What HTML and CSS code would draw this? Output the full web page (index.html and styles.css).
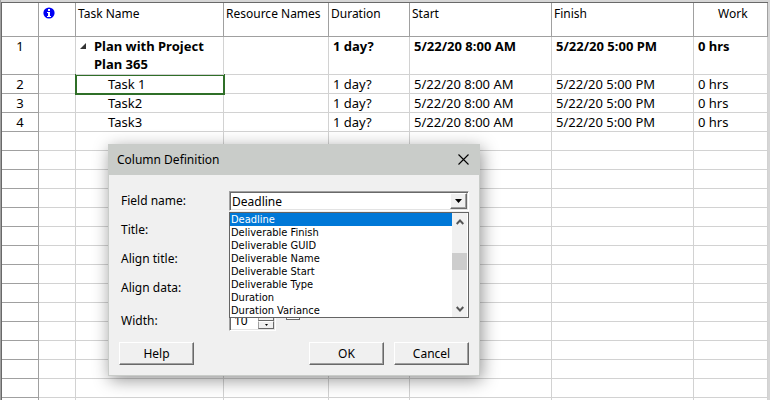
FILE: index.html
```
<!DOCTYPE html>
<html lang="en">
<head>
<meta charset="utf-8">
<title>Plan with Project Plan 365</title>
<link rel="stylesheet" href="styles.css">
</head>
<body>
<main class="sheet">
  <table class="grid">
    <colgroup>
      <col class="c-id"><col class="c-info"><col class="c-name"><col class="c-res"><col class="c-dur"><col class="c-date"><col class="c-date"><col class="c-work">
    </colgroup>
    <thead>
      <tr>
        <th></th>
        <th class="info"><svg width="12" height="12" viewBox="0 0 12 12" role="img" aria-label="Indicators"><circle cx="6" cy="6" r="5.6" fill="#0000f5"/><path d="M5 2h2v2H5zM4 5h3v4h1v1H4V9h1V6H4z" fill="#fff"/></svg></th>
        <th>Task Name</th><th>Resource Names</th><th>Duration</th><th>Start</th><th>Finish</th><th class="work">Work</th>
      </tr>
    </thead>
    <tbody id="rows">
      <tr class="summary"><td class="id">1</td><td></td><td class="name"><svg class="twisty" width="6" height="6" viewBox="0 0 6 6"><path d="M6 0v6H0z" fill="#333"/></svg>Plan with Project Plan 365</td><td></td><td>1 day?</td><td>5/22/20 8:00 AM</td><td>5/22/20 5:00 PM</td><td>0 hrs</td></tr>
      <tr><td class="id">2</td><td></td><td class="task selected">Task 1</td><td></td><td>1 day?</td><td>5/22/20 8:00 AM</td><td>5/22/20 5:00 PM</td><td>0 hrs</td></tr>
      <tr><td class="id">3</td><td></td><td class="task">Task2</td><td></td><td>1 day?</td><td>5/22/20 8:00 AM</td><td>5/22/20 5:00 PM</td><td>0 hrs</td></tr>
      <tr><td class="id">4</td><td></td><td class="task">Task3</td><td></td><td>1 day?</td><td>5/22/20 8:00 AM</td><td>5/22/20 5:00 PM</td><td>0 hrs</td></tr>
    </tbody>
  </table>
</main>

<section class="dialog" role="dialog" aria-labelledby="dlg-title">
  <header class="titlebar">
    <h1 id="dlg-title">Column Definition</h1>
    <button class="close" type="button" aria-label="Close"><svg width="11" height="11" viewBox="0 0 11 11"><path d="M.5.5l10 10M10.5.5l-10 10" stroke="#000" stroke-width="1.1" fill="none"/></svg></button>
  </header>
  <form class="body">
    <div class="row">
      <label for="field">Field name:</label>
      <div class="control">
        <div class="combo">
          <select id="field"><option>Deadline</option></select>
          <span class="arrow"><svg width="7" height="4" viewBox="0 0 7 4"><path d="M0 0h7L3.5 4z"/></svg></span>
        </div>
        <div class="dropdown">
          <ul role="listbox" aria-label="Field name">
            <li role="option" aria-selected="true">Deadline</li>
            <li role="option">Deliverable Finish</li>
            <li role="option">Deliverable GUID</li>
            <li role="option">Deliverable Name</li>
            <li role="option">Deliverable Start</li>
            <li role="option">Deliverable Type</li>
            <li role="option">Duration</li>
            <li role="option">Duration Variance</li>
          </ul>
          <div class="scrollbar">
            <svg width="8" height="6" viewBox="0 0 8 6"><path d="M.7 5L4 1.5 7.3 5" fill="none" stroke="#555" stroke-width="1.9"/></svg>
            <span class="thumb"></span>
            <svg width="8" height="6" viewBox="0 0 8 6"><path d="M.7 1L4 4.5 7.3 1" fill="none" stroke="#555" stroke-width="1.9"/></svg>
          </div>
        </div>
      </div>
    </div>
    <div class="row"><label for="title">Title:</label><input class="control sunken" id="title" type="text"></div>
    <div class="row"><label for="at">Align title:</label><select class="control sunken" id="at"></select></div>
    <div class="row"><label for="ad">Align data:</label><select class="control sunken" id="ad"></select></div>
    <div class="row last">
      <label for="width">Width:</label>
      <div class="spin sunken">
        <input id="width" type="text" value="10">
        <span class="steppers">
          <button type="button" aria-label="Increase"><svg width="3" height="2" viewBox="0 0 3 2"><path d="M0 2h3L1.5 0z"/></svg></button>
          <button type="button" aria-label="Decrease"><svg width="3" height="2" viewBox="0 0 3 2"><path d="M0 0h3L1.5 2z"/></svg></button>
        </span>
      </div>
      <input class="check" type="checkbox" aria-label="Wrap header text">
    </div>
    <footer class="buttons">
      <button class="btn help" type="button">Help</button>
      <button class="btn" type="button">OK</button>
      <button class="btn" type="button">Cancel</button>
    </footer>
  </form>
</section>
<script src="rows.js"></script>
</body>
</html>
```
FILE: styles.css
```
* { box-sizing: border-box; }
body {
  margin: 0;
  height: 100vh;
  overflow: hidden;
  background: #d6d6d6;
  color: #000;
  font-family: "Noto Sans", "Open Sans", sans-serif;
}
.sheet {
  height: 100%;
  overflow: hidden;
  padding: 2px 2px 0 0;
  border-left: 1px solid #a0a0a0;
}
.grid {
  width: 100%;
  table-layout: fixed;
  border-collapse: separate;
  border-spacing: 0;
  border-top: 1px solid #696969;
  border-left: 1px solid #696969;
  background: #fff;
}
.c-id, .c-info { width: 37px; }
.c-res { width: 105px; }
.c-dur { width: 81px; }
.c-date { width: 142px; }
.c-work { width: 74px; }
th {
  height: 34px;
  padding: 2px 2px 0;
  border-right: 1px solid #a0a0a0;
  border-bottom: 1px solid #a0a0a0;
  font-size: 12px;
  font-weight: 400;
  line-height: 18px;
  text-align: left;
  vertical-align: top;
  white-space: nowrap;
}
th.info { padding-left: 4px; }
.info svg { display: block; margin-top: 2px; }
th.work { padding-left: 24px; }
td {
  height: 19px;
  padding: 0 4px;
  border-right: 1px solid #d2d2d2;
  border-bottom: 1px solid #d2d2d2;
  font-size: 13px;
  line-height: 18px;
  vertical-align: top;
  white-space: nowrap;
}
td.id {
  padding: 0;
  text-align: center;
  border-color: #a0a0a0;
}
.summary td { height: 38px; font-weight: 700; }
.summary .id { font-weight: 400; }
.summary .name {
  position: relative;
  padding-left: 18px;
  white-space: normal;
}
.twisty { position: absolute; left: 4px; top: 6px; }
td.task { padding-left: 32px; }
td.selected { outline: 2px solid #2f6f28; outline-offset: -1px; }

.dialog {
  position: absolute;
  left: 108px;
  top: 144px;
  width: 372px;
  border: 1px solid #c9ccc9;
  border-top: 0;
  background: #f0f0f0;
  box-shadow: 2px 4px 16px rgba(0, 0, 0, .42);
}
.titlebar {
  display: flex;
  align-items: center;
  justify-content: space-between;
  height: 31px;
  padding: 0 10px 0 8px;
  background: #c9ccc9;
}
.titlebar h1 { margin: 0; font-size: 12px; font-weight: 400; }
.close { display: flex; padding: 0; border: 0; background: none; }
.body { padding: 11px 10px 10px; }
.row {
  display: flex;
  align-items: center;
  height: 29px;
  padding-left: 2px;
  font-size: 12px;
}
.row.last { margin: 4px 0 7px; }
.row label { flex: 0 0 108px; }
.control { position: relative; flex: 1; height: 20px; }
.combo, .sunken {
  border: 1px solid;
  border-color: #a0a0a0 #fff #fff #a0a0a0;
  border-radius: 0;
  background: #fff;
  box-shadow: inset 1px 1px #696969, inset -1px -1px #e3e3e3;
}
.combo { display: flex; height: 20px; padding: 1px 1px 1px 2px; }
.combo select {
  flex: 1;
  appearance: none;
  padding: 0;
  border: 0;
  background: none;
  font: 12px "Noto Sans", sans-serif;
}
.arrow {
  display: flex;
  align-items: center;
  justify-content: center;
  width: 17px;
  background: #f0f0f0;
  border: 1px solid;
  border-color: #fff #696969 #696969 #fff;
  box-shadow: inset -1px -1px #a0a0a0;
}
.dropdown {
  position: absolute;
  z-index: 2;
  top: 21px;
  left: 0;
  right: 0;
  display: flex;
  border: 1px solid #646464;
  background: #fff;
}
.dropdown ul { flex: 1; margin: 0; padding: 0; list-style: none; }
.dropdown li {
  padding-left: 1px;
  font: 11px/13px "DejaVu Sans Condensed", "Noto Sans", sans-serif;
}
.dropdown [aria-selected] { background: #0078d7; color: #fff; }
.scrollbar {
  display: flex;
  flex-direction: column;
  align-items: center;
  justify-content: space-between;
  width: 16px;
  padding: 6px 0 5px;
  border-right: 1px solid #fff;
  background: #f0f0f0;
}
.thumb { width: 100%; height: 17px; margin-bottom: 8px; background: #cdcdcd; }
.spin { display: flex; width: 47px; height: 20px; padding: 1px; }
.spin input {
  flex: 1;
  min-width: 0;
  padding: 0 3px;
  border: 0;
  background: none;
  font: 12px "Noto Sans", sans-serif;
}
.steppers { display: flex; flex-direction: column; width: 16px; }
.steppers button {
  display: flex;
  flex: 1;
  align-items: center;
  justify-content: center;
  padding: 0;
  border: 1px solid;
  border-color: #fff #696969 #696969 #a0a0a0;
  background: #f0f0f0;
}
.check {
  appearance: none;
  align-self: flex-start;
  width: 14px;
  height: 14px;
  margin: 0 0 0 10px;
  border: 1px solid #696969;
  background: #fff;
}
.buttons { display: flex; gap: 10px; }
.help { margin-right: auto; }
.btn {
  width: 75px;
  height: 23px;
  padding: 0;
  border: 1px solid;
  border-color: #fff #696969 #696969 #fff;
  background: #f0f0f0;
  box-shadow: inset -1px -1px #a0a0a0;
  font: 12px "Noto Sans", sans-serif;
}
```
FILE: rows.js
```
// Pad the sheet with blank rows below the last task.
const rows = document.getElementById("rows");
for (let i = 0; i < 15; i++) {
  const tr = rows.insertRow();
  for (let c = 0; c < 8; c++) tr.insertCell();
  tr.cells[0].className = "id";
}
```
